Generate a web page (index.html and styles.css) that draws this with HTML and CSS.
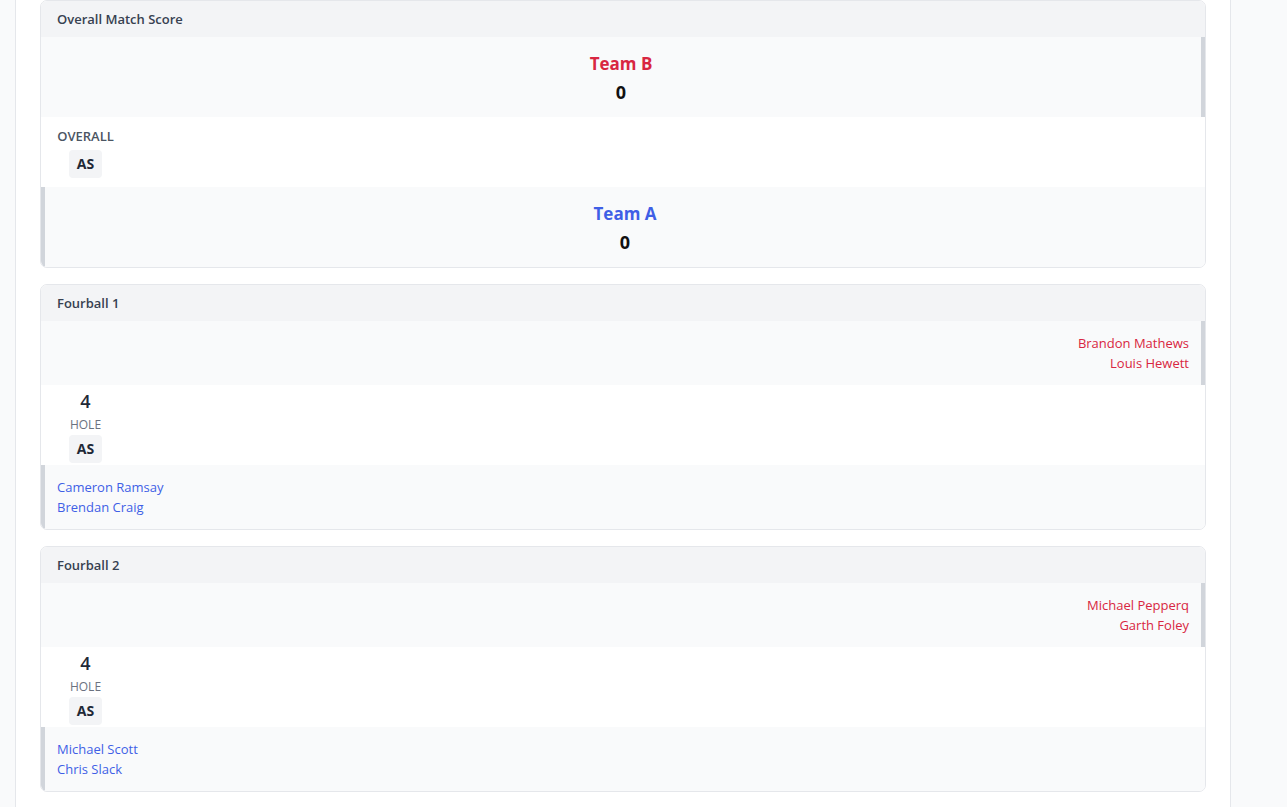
FILE: index.html
```html
<!DOCTYPE html>
<html lang="en">
<head>
<meta charset="utf-8">
<title>Match Score</title>
<link rel="stylesheet" href="styles.css">
</head>
<body>
<div class="page">
  <div class="gutter"></div>
  <main class="panel">
    <section class="card">
      <div class="card-head">Overall Match Score</div>
      <div class="team team-b center">
        <div class="team-name red">Team B</div>
        <div class="team-score">0</div>
      </div>
      <div class="mid mid-overall">
        <div class="stack">
          <div class="label">OVERALL</div>
          <div class="badge">AS</div>
        </div>
      </div>
      <div class="team team-a center">
        <div class="team-name blue">Team A</div>
        <div class="team-score">0</div>
      </div>
    </section>

    <section class="card">
      <div class="card-head">Fourball 1</div>
      <div class="team team-b names right red">
        <div>Brandon Mathews</div>
        <div>Louis Hewett</div>
      </div>
      <div class="mid mid-hole">
        <div class="stack">
          <div class="hole-num">4</div>
          <div class="hole-label">HOLE</div>
          <div class="badge">AS</div>
        </div>
      </div>
      <div class="team team-a names blue">
        <div>Cameron Ramsay</div>
        <div>Brendan Craig</div>
      </div>
    </section>

    <section class="card">
      <div class="card-head">Fourball 2</div>
      <div class="team team-b names right red">
        <div>Michael Pepperq</div>
        <div>Garth Foley</div>
      </div>
      <div class="mid mid-hole">
        <div class="stack">
          <div class="hole-num">4</div>
          <div class="hole-label">HOLE</div>
          <div class="badge">AS</div>
        </div>
      </div>
      <div class="team team-a names blue">
        <div>Michael Scott</div>
        <div>Chris Slack</div>
      </div>
    </section>
  </main>
</div>
</body>
</html>
```
FILE: styles.css
```css
* { box-sizing: border-box; }
html, body { margin: 0; padding: 0; }
body {
  background: #f9fafb;
  font-family: "Open Sans", "Noto Sans", "Liberation Sans", sans-serif;
  color: #1f2937;
}
.page {
  display: flex;
  min-height: 807px;
}
.gutter { width: 15px; flex: none; }
.panel {
  width: 1216px;
  flex: none;
  background: #ffffff;
  border-left: 1px solid #e5e7eb;
  border-right: 1px solid #e5e7eb;
  padding: 0 24px 16px;
  display: flex;
  flex-direction: column;
  gap: 16px;
}
.card {
  border: 1px solid #e5e7eb;
  border-radius: 7px;
  overflow: hidden;
  background: #ffffff;
}
.card-head {
  background: #f3f4f6;
  padding: 8px 16px;
  font-size: 13px;
  font-weight: 600;
  line-height: 20px;
  color: #374151;
}
.team {
  background: #f9fafb;
  padding: 12px;
}
.team.center { padding-top: 13px; padding-bottom: 11px; }
.team-b { border-right: 4px solid #d1d5db; }
.team-a { border-left: 4px solid #d1d5db; }
.center { text-align: center; }
.right { text-align: right; }
.team-name {
  font-size: 17px;
  font-weight: 700;
  line-height: 28px;
}
.team-score {
  font-size: 18px;
  font-weight: 700;
  line-height: 28px;
  color: #111111;
}
.names {
  font-size: 13px;
  line-height: 20px;
}
.red { color: #d82641; }
.blue { color: #3f5fe6; }
.mid {
  background: #ffffff;
  display: flex;
  padding: 0 16px;
}
.mid-overall { padding-top: 9px; padding-bottom: 9px; }
.mid-hole { padding-top: 2px; padding-bottom: 2px; }
.stack {
  min-width: 57px;
  display: flex;
  flex-direction: column;
  align-items: center;
}
.label {
  font-size: 13px;
  font-weight: 600;
  line-height: 20px;
  color: #4b5563;
}
.hole-num {
  font-size: 18px;
  font-weight: 600;
  line-height: 28px;
  color: #1f2937;
}
.hole-label {
  margin-top: 2px;
  font-size: 12px;
  line-height: 16px;
  color: #6b7280;
}
.mid-hole .badge { margin-top: 2px; }
.badge {
  margin-top: 4px;
  background: #f3f4f6;
  border-radius: 4px;
  padding: 4px 8px;
  font-size: 14px;
  font-weight: 700;
  line-height: 20px;
  color: #1f2937;
}
```
